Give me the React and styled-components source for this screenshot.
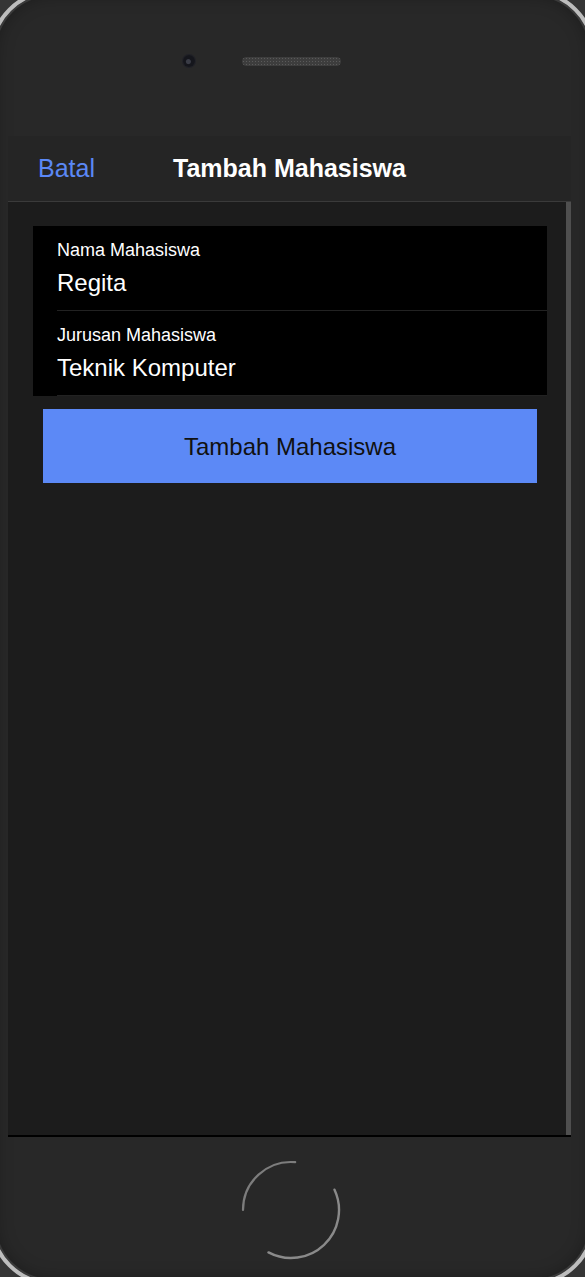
import React from 'react';
import styled, { createGlobalStyle } from 'styled-components';

const GlobalStyle = createGlobalStyle`
  html, body { margin: 0; padding: 0; background: #353535; }
  body { font-family: "Liberation Sans", Arial, sans-serif; }
  * { box-sizing: border-box; }
`;

// --- DEVICE FRAME ---
const Viewport = styled.div`
  width: 585px; height: 1277px; overflow: hidden; background: #353535;
`;
const Phone = styled.div`
  width: 605px; height: 1295px; margin: -10px 0 0 -10px;
  border-radius: 62px; border: 4px solid #bdbdbd;
  background: #282828;
  box-shadow: inset 0 0 0 2px #3a3a3a, inset 0 0 18px rgba(0,0,0,0.35);
  display: flex; flex-direction: column;
`;
const Sensors = styled.div`
  display: flex; align-items: center; gap: 47px;
  height: 12px; margin: 61px 0 0 189px;
`;
const Camera = styled.div`
  width: 12px; height: 12px; border-radius: 50%;
  background: radial-gradient(circle at 45% 55%, #3a3c46 0 2px, #15161c 3px 100%);
  box-shadow: 0 0 0 1px #202128;
`;
const Speaker = styled.div`
  width: 99px; height: 9px; border-radius: 5px;
  background-color: #3d3d3d;
  background-image: radial-gradient(#5a5a5a 0.8px, transparent 1px);
  background-size: 3px 3px;
`;
const HomeButton = styled.svg`
  width: 100px; height: 100px; margin: 23px 0 0 247px; display: block;
`;

// --- SCREEN ---
const Screen = styled.div`
  width: 563px; height: 1001px; margin: 69px 0 0 14px;
  display: flex; flex-direction: column;
  background: #1c1c1c; border-bottom: 2px solid #000;
`;
const NavBar = styled.div`
  height: 66px; flex-shrink: 0;
  display: grid; grid-template-columns: 1fr auto 1fr; align-items: center;
  background: #252525; border-bottom: 1px solid #3a3a3a;
`;
const NavAction = styled.span`
  padding-left: 30px; font-size: 25px; color: #5b88f5;
`;
const NavTitle = styled.span`
  font-size: 25px; font-weight: 700; color: #fff;
`;
const Body = styled.div`
  flex: 1; display: flex; min-height: 0;
`;
const Content = styled.div`
  flex: 1; padding: 24px 19px 0 25px;
`;
const Scrollbar = styled.div`
  width: 5px; background: #4f4f4f;
`;

// --- FORM ---
const FormCard = styled.div`
  background: #000;
`;
const Row = styled.div`
  padding-left: 24px;
`;
const RowInner = styled.div`
  padding: 14px 0 13px;
  border-bottom: 1px solid #222;
  display: flex; flex-direction: column;
`;
const Label = styled.label`
  font-size: 18px; line-height: 20px; color: #fff;
`;
const Value = styled.input`
  margin-top: 9px; padding: 0; border: 0; outline: none;
  background: transparent; color: #fff;
  font-family: inherit; font-size: 24px; line-height: 28px; height: 28px;
`;
const SubmitButton = styled.button`
  display: block; width: 494px; height: 74px; margin: 13px 0 0 10px;
  padding: 2px 0 0; border: 0; border-radius: 0;
  background: #5c89f6; color: #111;
  font-family: inherit; font-size: 24px;
`;

const fields = [
  { label: 'Nama Mahasiswa', value: 'Regita' },
  { label: 'Jurusan Mahasiswa', value: 'Teknik Komputer' },
];

export default function App() {
  return (
    <Viewport>
      <GlobalStyle />
      <Phone>
        <Sensors>
          <Camera />
          <Speaker />
        </Sensors>

        <Screen>
          <NavBar>
            <NavAction>Batal</NavAction>
            <NavTitle>Tambah Mahasiswa</NavTitle>
            <span />
          </NavBar>
          <Body>
            <Content>
              <FormCard>
                {fields.map((f) => (
                  <Row key={f.label}>
                    <RowInner>
                      <Label>{f.label}</Label>
                      <Value defaultValue={f.value} />
                    </RowInner>
                  </Row>
                ))}
              </FormCard>
              <SubmitButton type="button">Tambah Mahasiswa</SubmitButton>
            </Content>
            <Scrollbar />
          </Body>
        </Screen>

        <HomeButton viewBox="0 0 100 100">
          <path d="M2 50 A48 48 0 0 1 54.2 2.2" fill="none" stroke="#7d7d7d" strokeWidth="2.2" strokeLinecap="round" />
          <path d="M93.5 29.7 A48 48 0 0 1 27.5 92.4" fill="none" stroke="#8a8a8a" strokeWidth="2.4" strokeLinecap="round" />
        </HomeButton>
      </Phone>
    </Viewport>
  );
}
